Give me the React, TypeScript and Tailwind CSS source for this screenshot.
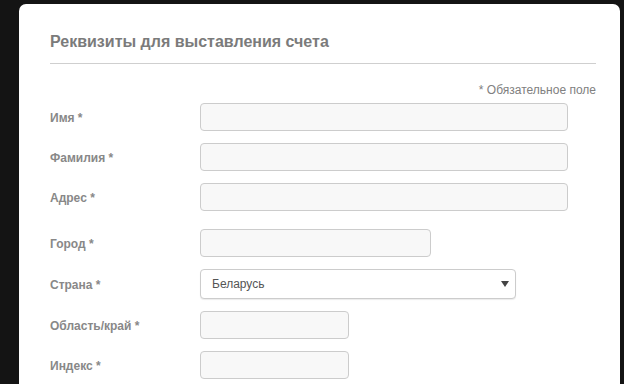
import React from "react";

const font = { fontFamily: '"Liberation Sans", Arial, sans-serif' };

function Row({ label, width, mt = "mt-[12px]", children }: { label: string; width?: string; mt?: string; children?: React.ReactNode }) {
  return (
    <div className={`flex items-center ${mt}`}>
      <div className="w-[150px] shrink-0 pt-[2px] text-[12px] font-bold text-[#888888] leading-[16px]">{label}</div>
      {children ?? (
        <div className={`h-[28px] ${width} rounded-[4px] border border-[#cccccc] bg-[#f8f8f8]`} />
      )}
    </div>
  );
}

export default function App() {
  return (
    <div className="w-[624px] h-[384px] overflow-hidden bg-[#141414]" style={font}>
      <div className="ml-[19px] mt-[4px] w-[601px] h-[400px] rounded-t-[7px] bg-white pl-[31px] pr-[24px] pt-[28px]">
        <h1 className="text-[16px] leading-[20px] font-bold text-[#7b7b7b]">Реквизиты для выставления счета</h1>
        <div className="mt-[11px] h-px bg-[#cfcfcf]" />
        <div className="mt-[18px] text-right text-[12px] leading-[16px] text-[#808080]">* Обязательное поле</div>
        <Row label="Имя *" width="w-[368px]" mt="mt-[5px]" />
        <Row label="Фамилия *" width="w-[368px]" />
        <Row label="Адрес *" width="w-[368px]" />
        <Row label="Город *" width="w-[231px]" mt="mt-[18px]" />
        <Row label="Страна *">
          <div className="flex h-[30px] w-[316px] items-center justify-between rounded-[4px] border border-[#cccccc] bg-white pl-[11px] pr-[6px] shadow-[0_1px_1px_rgba(0,0,0,0.08)]">
            <span className="text-[12px] text-[#555555]">Беларусь</span>
            <svg width="8" height="6" viewBox="0 0 8 6"><path d="M0 0 H8 L4 6 Z" fill="#444" /></svg>
          </div>
        </Row>
        <Row label="Область/край *" width="w-[149px]" />
        <Row label="Индекс *" width="w-[149px]" />
      </div>
    </div>
  );
}
